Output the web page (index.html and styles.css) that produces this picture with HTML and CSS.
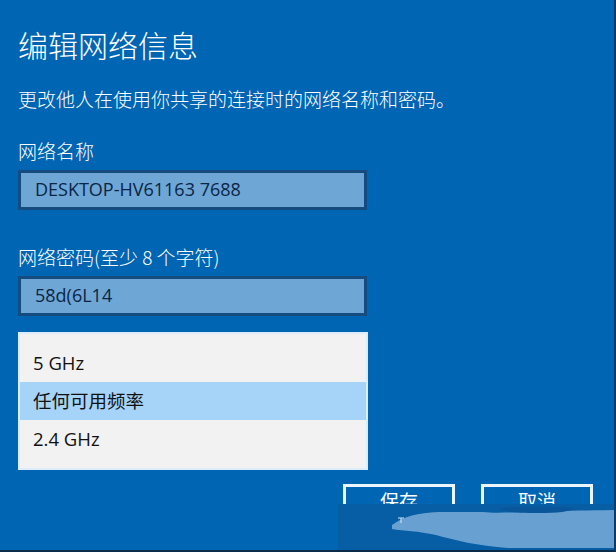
FILE: index.html
```html
<!DOCTYPE html>
<html lang="zh-CN">
  <head>
    <meta charset="UTF-8" />
    <meta name="viewport" content="width=device-width, initial-scale=1.0" />
    <title>编辑网络信息</title>
    <link rel="stylesheet" href="styles.css">
  </head>
  <body>
    <div class="dialog">
      <h1 class="title">编辑网络信息</h1>
      <p class="desc">更改他人在使用你共享的连接时的网络名称和密码。</p>

      <div class="field">
        <label class="field-label">网络名称</label>
        <div class="input">DESKTOP-HV61163 7688</div>
      </div>

      <div class="field">
        <label class="field-label">网络密码(至少 8 个字符)</label>
        <div class="input">58d(6L14</div>
      </div>

      <ul class="band-list">
        <li>5 GHz</li>
        <li class="selected">任何可用频率</li>
        <li>2.4 GHz</li>
      </ul>

      <div class="actions">
        <button class="btn">保存</button>
        <button class="btn">取消</button>
      </div>

      <!-- smeared watermark patch over the bottom of the buttons -->
      <svg class="smudge" width="278" height="46" viewBox="0 0 278 46">
        <rect x="0" y="0" width="278" height="46" fill="#075ea5" />
        <path d="M54 21 C66 12 80 9 100 8 L145 8 C160 10 200 7 278 6 L278 44 L170 44 C140 42 116 36 98 31 C80 27 66 27 54 25 Z" fill="#68a1d1" />
        <path d="M160 4 C180 2 220 2 236 4 C232 8 220 9 200 9 C180 9 168 8 160 4 Z" fill="#0a569a" />
        <path d="M60 14 L66 14 M63 14 L63 19" stroke="#d6e8f6" stroke-width="1" />
      </svg>
    </div>
  </body>
</html>
```

FILE: styles.css
```css
* {
  box-sizing: border-box;
}
html,
body {
  margin: 0;
  padding: 0;
}
body {
  font-family: 'Noto Sans CJK SC', sans-serif;
  background: #0a2a4a;
}
.dialog {
  position: relative;
  width: 616px;
  height: 552px;
  padding: 24px 0 0 18px;
  background: #0065b3;
  border-right: 2px solid #0f3a66;
  border-bottom: 2px solid #0a2a4a;
  color: #ffffff;
  overflow: hidden;
}
.title {
  margin: 0;
  font-size: 30px;
  line-height: 40px;
  font-weight: 300;
}
.desc {
  margin: 22px 0 0;
  font-size: 19px;
  line-height: 26px;
  font-weight: 300;
}
.field {
  display: flex;
  flex-direction: column;
  gap: 6px;
  margin-top: 26px;
}
.field + .field {
  margin-top: 34px;
}
.field-label {
  font-size: 19px;
  line-height: 26px;
  font-weight: 300;
}
.input {
  width: 349px;
  height: 40px;
  padding: 0 0 0 14px;
  background: #6ea6d6;
  border: 3px solid #164b80;
  color: #0b2544;
  font-family: 'Open Sans', 'Noto Sans CJK SC', sans-serif;
  font-size: 18px;
  line-height: 33px;
}
.band-list {
  list-style: none;
  width: 350px;
  margin: 16px 0 0;
  padding: 10px 0;
  background: #f2f2f2;
  border: 2px solid #dcecf8;
  color: #111111;
  font-family: 'Open Sans', 'Noto Sans CJK SC', sans-serif;
  font-size: 18.5px;
}
.band-list li {
  height: 38px;
  padding-left: 13px;
  line-height: 38px;
}
.band-list .selected {
  background: #a6d3f8;
}
.actions {
  display: flex;
  gap: 26px;
  margin: 14px 0 0 325px;
}
.btn {
  width: 112px;
  height: 34px;
  padding: 0;
  background: transparent;
  border: 3px solid #eaf5ff;
  color: #ffffff;
  font-family: 'Noto Sans CJK SC', sans-serif;
  font-size: 19px;
  line-height: 26px;
}
.smudge {
  position: absolute;
  left: 338px;
  top: 504px;
}
```
